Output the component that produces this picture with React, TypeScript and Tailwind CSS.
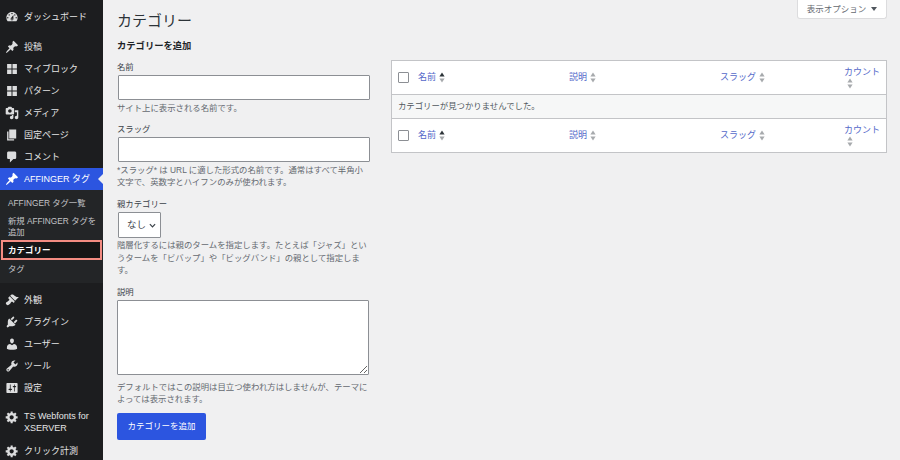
import type { ReactNode } from "react";

const icons = {
  dashboard:
    "M3.76 16h12.48c1.1-1.37 1.76-3.11 1.76-5 0-4.42-3.58-8-8-8s-8 3.58-8 8c0 1.89.66 3.63 1.76 5zM10 4c.55 0 1 .45 1 1s-.45 1-1 1-1-.45-1-1 .45-1 1-1zM6 6c.55 0 1 .45 1 1s-.45 1-1 1-1-.45-1-1 .45-1 1-1zm8 0c.55 0 1 .45 1 1s-.45 1-1 1-1-.45-1-1 .45-1 1-1zm-5.37 5.55L12 7v6c0 1.1-.9 2-2 2s-2-.9-2-2c0-.57.24-1.08.63-1.45zM4 10c.55 0 1 .45 1 1s-.45 1-1 1-1-.45-1-1 .45-1 1-1zm12 0c.55 0 1 .45 1 1s-.45 1-1 1-1-.45-1-1 .45-1 1-1zm-5 3c0-.55-.45-1-1-1s-1 .45-1 1 .45 1 1 1 1-.45 1-1z",
  pin: "M10.44 3.02l1.82-1.82 6.36 6.35-1.83 1.82c-1.05-.68-2.48-.57-3.41.36l-.75.75c-.92.93-1.04 2.35-.35 3.41l-1.83 1.82-2.41-2.41-2.8 2.79c-.42.42-3.38 2.71-3.8 2.29s1.86-3.39 2.28-3.81l2.79-2.79L4.1 9.36l1.83-1.82c1.05.69 2.48.57 3.4-.36l.75-.75c.93-.92 1.05-2.35.36-3.41z",
  blocks: "M3 3h6.3v6.3H3zM10.7 3H17v6.3h-6.3zM3 10.7h6.3V17H3zM10.7 10.7H17V17h-6.3z",
  media:
    "M13 11V4c0-.55-.45-1-1-1h-1.67L9 1H5L3.67 3H2c-.55 0-1 .45-1 1v7c0 .55.45 1 1 1h10c.55 0 1-.45 1-1zM7 4.5c1.38 0 2.5 1.12 2.5 2.5S8.38 9.5 7 9.5 4.5 8.38 4.5 7 5.62 4.5 7 4.5zM14 6h5v10.5c0 1.38-1.12 2.5-2.5 2.5S14 17.88 14 16.5s1.12-2.5 2.5-2.5c.17 0 .34.02.5.05V9h-3V6zm-4 8.05V13h2v3.5c0 1.38-1.12 2.5-2.5 2.5S7 17.88 7 16.5 8.12 14 9.5 14c.17 0 .34.02.5.05z",
  page: "M6 15V2h10v13H6zm-1 1h8v2H3V5h2v11z",
  comment: "M5 2h9c1.1 0 2 .9 2 2v7c0 1.1-.9 2-2 2h-2l-5 5v-5H5c-1.1 0-2-.9-2-2V4c0-1.1.9-2 2-2z",
  appearance:
    "M14.48 11.06L7.41 3.99l1.5-1.5c.5-.56 2.3-.47 3.51.32 1.21.8 1.43 1.28 2.91 2.1 1.18.64 2.45 1.26 4.45.85zm-.71.71L6.7 4.7 4.93 6.47c-.39.39-.39 1.02 0 1.41l1.06 1.06c.39.39.39 1.03 0 1.42-.6.6-1.43 1.11-2.21 1.69-.35.26-.7.53-1.01.84C1.43 13.23.4 14.91 2.06 16.57c1.65 1.66 3.33.63 4.67-.71.31-.31.58-.66.84-1.01.58-.78 1.09-1.61 1.69-2.21.39-.39 1.02-.39 1.41 0l1.06 1.06c.39.39 1.02.39 1.41 0z",
  plugin:
    "M13.11 4.36L9.87 7.6 8 5.73l3.24-3.24c.35-.34 1.05-.2 1.56.32.52.51.66 1.21.31 1.55zm-8 1.77l.91-1.12 9.01 9.01-1.19.84c-.71.71-2.63 1.16-3.82 1.16H6.14L4.9 17.26c-.59.59-1.54.59-2.12 0-.59-.58-.59-1.53 0-2.12l1.24-1.24v-3.88c0-1.13.4-3.19 1.09-3.89zm7.26 3.97l3.24-3.24c.34-.35 1.04-.21 1.55.31.52.51.66 1.21.31 1.55l-3.24 3.25z",
  user: "M10 9.25c-2.27 0-2.73-3.44-2.73-3.44C7 4.02 7.82 2 9.97 2c2.16 0 2.98 2.02 2.71 3.81 0 0-.41 3.44-2.68 3.44zm0 2.57L12.72 10c2.39 0 4.52 2.33 4.52 4.53v2.49s-3.65 1.13-7.24 1.13c-3.65 0-7.24-1.13-7.24-1.13v-2.49c0-2.25 1.94-4.48 4.47-4.48z",
  tools:
    "M16.68 9.77c-1.34 1.34-3.3 1.67-4.95.99l-5.41 6.52c-.99.99-2.59.99-3.58 0s-.99-2.59 0-3.57l6.52-5.42c-.68-1.65-.35-3.61.99-4.95 1.28-1.28 3.12-1.62 4.72-1.06l-2.89 2.89 2.82 2.82 2.86-2.87c.53 1.58.18 3.39-1.08 4.65zM3.81 16.21c.4.39 1.04.39 1.43 0 .4-.4.4-1.04 0-1.43-.39-.4-1.03-.4-1.43 0-.39.39-.39 1.03 0 1.43z",
  settings:
    "M18 16V4c0-.55-.45-1-1-1H3c-.55 0-1 .45-1 1v12c0 .55.45 1 1 1h14c.55 0 1-.45 1-1zM8 11h1c.55 0 1 .45 1 1s-.45 1-1 1H8v1.5c0 .28-.22.5-.5.5s-.5-.22-.5-.5V13H6c-.55 0-1-.45-1-1s.45-1 1-1h1V5.5c0-.28.22-.5.5-.5s.5.22.5.5V11zm5-2h-1c-.55 0-1-.45-1-1s.45-1 1-1h1V5.5c0-.28.22-.5.5-.5s.5.22.5.5V7h1c.55 0 1 .45 1 1s-.45 1-1 1h-1v5.5c0 .28-.22.5-.5.5s-.5-.22-.5-.5V9z",
  gear: "M18 12h-2.18c-.17.7-.44 1.35-.81 1.93l1.54 1.54-2.1 2.1-1.54-1.54c-.58.36-1.23.63-1.91.79V19H8v-2.18c-.68-.16-1.33-.43-1.91-.79l-1.54 1.54-2.12-2.12 1.54-1.54c-.36-.58-.63-1.23-.79-1.91H1V9.03h2.17c.16-.7.44-1.35.8-1.94L2.43 5.55l2.1-2.1 1.54 1.54c.58-.37 1.24-.64 1.93-.81V2h3v2.18c.68.16 1.33.43 1.91.79l1.54-1.54 2.12 2.12-1.54 1.54c.36.59.64 1.24.8 1.94H18V12zm-8.5 1.5c1.66 0 3-1.34 3-3s-1.34-3-3-3-3 1.34-3 3 1.34 3 3 3z",
};

function MenuItem({ icon, children, active, top }: { icon: keyof typeof icons; children: ReactNode; active?: boolean; top?: boolean }) {
  return (
    <div className={`relative flex min-h-[22px] pl-[5px] ${top ? "items-start" : "items-center"} ${active ? "bg-[#2c55e0] text-white" : "text-[#e4e5e6]"}`}>
      <svg viewBox="0 0 20 20" className={`w-[14px] h-[14px] shrink-0 ${active ? "text-white" : "text-[#dcddde]"}`} fill="currentColor">
        <path d={icons[icon]} />
      </svg>
      <span className="ml-[5px] text-[9px] leading-[12px]">{children}</span>
      {active && <span className="absolute right-0 top-[6px] border-y-[5px] border-r-[5px] border-y-transparent border-r-[#f0f0f0]" />}
    </div>
  );
}

function SortArrows({ dark }: { dark?: boolean }) {
  return (
    <svg viewBox="0 0 6 11" className="w-[6px] h-[11px] inline-block">
      <path d="M3 0.5 5.6 4.5H0.4z" fill={dark ? "#2c3338" : "#a7aaad"} />
      <path d="M3 10.5 5.6 6.5H0.4z" fill="#a7aaad" />
    </svg>
  );
}

function TableRow() {
  return (
    <div className="flex items-center h-[33px] text-[9px] text-[#5469c9]">
      <span className="w-[26px] pl-[6px] shrink-0">
        <span className="block w-[11px] h-[11px] bg-white border border-[#8c8f94] rounded-[1px]" />
      </span>
      <span className="w-[151px] shrink-0 flex items-center gap-[3px]">名前 <SortArrows dark /></span>
      <span className="w-[151px] shrink-0 flex items-center gap-[3px]">説明 <SortArrows /></span>
      <span className="w-[124px] shrink-0 flex items-center gap-[3px]">スラッグ <SortArrows /></span>
      <span className="flex flex-col items-start leading-[12px]">
        <span>カウント</span>
        <span className="ml-[3px] flex"><SortArrows /></span>
      </span>
    </div>
  );
}

export default function App() {
  return (
    <div className="flex h-[460px] w-[900px] overflow-hidden bg-[#f0f0f1] font-['Liberation_Sans','Noto_Sans_CJK_JP',sans-serif] text-[#3c434a]">
      <aside className="w-[103px] shrink-0 bg-[#1c1d1f] pt-[6px]">
        <MenuItem icon="dashboard">ダッシュボード</MenuItem>
        <div className="h-[8px]" />
        <MenuItem icon="pin">投稿</MenuItem>
        <MenuItem icon="blocks">マイブロック</MenuItem>
        <MenuItem icon="blocks">パターン</MenuItem>
        <MenuItem icon="media">メディア</MenuItem>
        <MenuItem icon="page">固定ページ</MenuItem>
        <MenuItem icon="comment">コメント</MenuItem>
        <MenuItem icon="pin" active>AFFINGER タグ</MenuItem>
        <div className="pt-[3px] pb-[5px] text-[8.3px] leading-[11px] text-[#c3c4c7] bg-[#232527]">
          <div className="px-[8px] py-[4px] leading-[12px]">AFFINGER タグ一覧</div>
          <div className="pl-[8px] pr-[2px] pt-[3px] pb-[2px]">新規 AFFINGER タグを追加</div>
          <div className="mx-[1px] h-[20px] flex items-center px-[5px] border-2 border-[#f28b82] bg-[#141516] text-[8.5px] font-bold text-white">カテゴリー</div>
          <div className="px-[8px] py-[3px] leading-[12px]">タグ</div>
        </div>
        <div className="h-[6px]" />
        <MenuItem icon="appearance">外観</MenuItem>
        <MenuItem icon="plugin">プラグイン</MenuItem>
        <MenuItem icon="user">ユーザー</MenuItem>
        <MenuItem icon="tools">ツール</MenuItem>
        <MenuItem icon="settings">設定</MenuItem>
        <div className="h-[11px]" />
        <MenuItem icon="gear" top>TS Webfonts for XSERVER</MenuItem>
        <div className="h-[6px]" />
        <MenuItem icon="gear">クリック計測</MenuItem>
      </aside>

      <main className="relative flex-1 flex gap-[21px] pl-[14px] pr-[13px]">
        <button className="absolute right-[13px] top-0 w-[90px] h-[19px] bg-white border border-t-0 border-[#dcdcde] rounded-b-[3px] flex items-center justify-center gap-[5px] text-[8.5px] text-[#646970]">
          表示オプション
          <svg viewBox="0 0 6 4" className="w-[6px] h-[4px]"><path d="M0 0h6L3 4z" fill="#50575e" /></svg>
        </button>

        <section className="w-[253px] shrink-0">
          <h1 className="mt-[11px] text-[15px] leading-[20px] text-[#2c3338]">カテゴリー</h1>
          <h2 className="mt-[9px] text-[9.3px] leading-[12px] font-bold text-[#1d2327]">カテゴリーを追加</h2>

          <label className="block mt-[9px] text-[8.4px] leading-[12px]">名前</label>
          <input className="block mt-[2px] ml-[1px] w-[252px] h-[25px] bg-white border border-[#8c8f94] rounded-[1px]" />
          <p className="mt-[2px] text-[8.4px] leading-[12px] text-[#646970]">サイト上に表示される名前です。</p>

          <label className="block mt-[9px] text-[8.4px] leading-[12px]">スラッグ</label>
          <input className="block mt-[2px] ml-[1px] w-[252px] h-[25px] bg-white border border-[#8c8f94] rounded-[1px]" />
          <p className="mt-[2px] text-[8.4px] leading-[12px] text-[#646970]">*スラッグ* は URL に適した形式の名前です。通常はすべて半角小文字で、英数字とハイフンのみが使われます。</p>

          <label className="block mt-[10px] text-[8.4px] leading-[12px]">親カテゴリー</label>
          <div className="mt-[2px] ml-[1px] w-[43px] h-[26px] bg-white border border-[#8c8f94] rounded-[1px] flex items-center pl-[8px] gap-[3px] text-[9.5px]">
            なし
            <svg viewBox="0 0 8 5" className="w-[7px] h-[5px]"><path d="M1 1l3 3 3-3" fill="none" stroke="#3c434a" strokeWidth="1.4" /></svg>
          </div>
          <p className="mt-[1px] text-[8.4px] leading-[12.5px] text-[#646970]">階層化するには親のタームを指定します。たとえば「ジャズ」というタームを「ビバップ」や「ビッグバンド」の親として指定します。</p>

          <label className="block mt-[9px] text-[8.4px] leading-[12px]">説明</label>
          <textarea className="block mt-[2px] w-[252px] h-[75px] bg-white border border-[#8c8f94] rounded-[1px]" />
          <p className="mt-[6px] text-[8.4px] leading-[12px] text-[#646970]">デフォルトではこの説明は目立つ使われ方はしませんが、テーマによっては表示されます。</p>

          <button className="block mt-[8px] w-[89px] h-[27px] bg-[#2c55e0] rounded-[2px] text-white text-[8.5px]">カテゴリーを追加</button>
        </section>

        <section className="flex-1 pt-[60px]">
          <div className="bg-white border border-[#c3c4c7]">
            <TableRow />
            <div className="h-[25px] flex items-center pl-[6px] bg-[#f6f7f7] border-y border-[#c3c4c7] text-[8.4px] text-[#50575e]">カテゴリーが見つかりませんでした。</div>
            <TableRow />
          </div>
        </section>
      </main>
    </div>
  );
}
